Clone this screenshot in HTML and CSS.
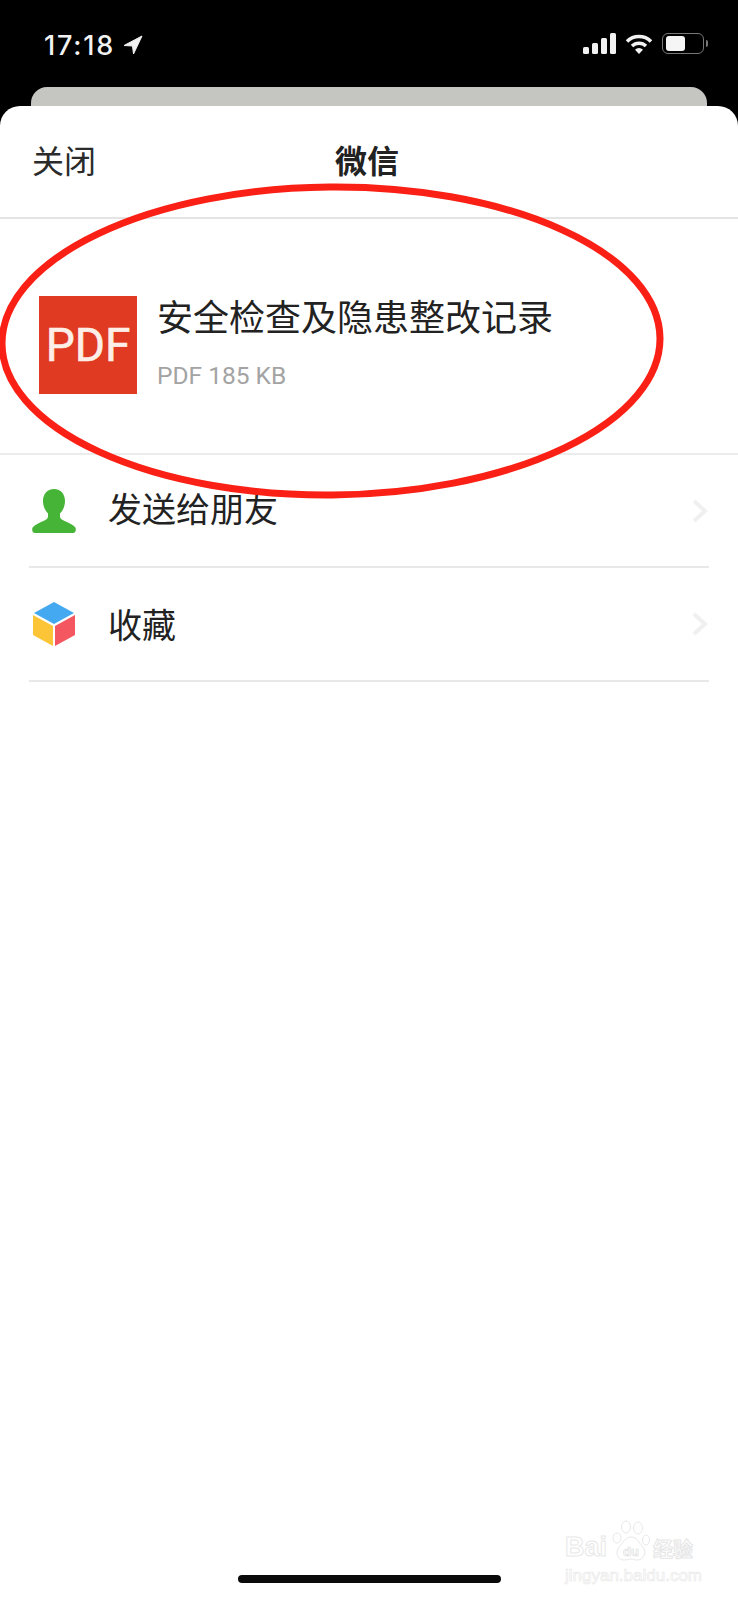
FILE: index.html
```html
<!DOCTYPE html>
<html lang="zh-CN">
<head>
  <meta charset="UTF-8">
  <meta name="viewport" content="width=device-width, initial-scale=1.0">
  <title>微信</title>
  <link rel="stylesheet" href="styles.css">
</head>
<body>
  <div class="phone">
    <div class="status-bar">
      <div class="status-left">
        <span class="time">17:18</span>
        <svg class="location" viewBox="0 0 20 20"><path d="M19 1 1 10.500l8.500.5 1 8z"/></svg>
      </div>
      <div class="status-right">
        <svg class="signal" viewBox="0 0 33 21"><rect x="0" y="14" width="6" height="7" rx="1.5"/><rect x="9" y="10" width="6" height="11" rx="1.5"/><rect x="18" y="5" width="6" height="16" rx="1.5"/><rect x="27" y="0" width="6" height="21" rx="1.5"/></svg>
        <svg class="wifi" viewBox="0 0 28 20">
          <path class="arc" d="M2 7.500a17 17 0 0 1 24 0"/>
          <path class="arc" d="M7 12a10 10 0 0 1 14 0"/>
          <path class="dot" d="M14 20l-4-4.200a5.600 5.600 0 0 1 8 0z"/>
        </svg>
        <div class="battery"><div class="battery-fill"></div></div>
        <div class="battery-nub"></div>
      </div>
    </div>
    <div class="peek-card"></div>
    <div class="sheet">
      <div class="sheet-header">
        <span class="close">关闭</span>
        <span class="sheet-title">微信</span>
      </div>
      <div class="file-info">
        <div class="pdf-icon">PDF</div>
        <div class="file-text">
          <div class="file-name">安全检查及隐患整改记录</div>
          <div class="file-meta">PDF 185 KB</div>
        </div>
      </div>
      <div class="action-list">
        <div class="action">
          <svg class="action-icon" viewBox="0 0 44 44"><path fill="#46b436" d="M22 0c7 0 11 5.500 11 12 0 5-2 9.500-5 12.500v3c0 2 1.500 3 4 4.200 4 1.800 8 3.300 11 6.300 1.500 1.500 1 6-2 6H3c-3 0-3.500-4.500-2-6 3-3 7-4.500 11-6.300 2.500-1.200 4-2.200 4-4.200v-3c-3-3-5-7.500-5-12.500C11 5.500 15 0 22 0z"/></svg>
          <span class="action-label">发送给朋友</span>
          <svg class="chevron" viewBox="0 0 16 24"><path d="M2 2l11 10L2 22"/></svg>
        </div>
        <div class="action">
          <svg class="action-icon" viewBox="0 0 44 44">
            <path fill="#45a9f2" d="M22 0l20 11-20 11L2 11z"/>
            <path fill="#fcc537" d="M1 13l20 11v20L1 33z"/>
            <path fill="#f4575f" d="M43 13 23 24v20l20-11z"/>
          </svg>
          <span class="action-label">收藏</span>
          <svg class="chevron" viewBox="0 0 16 24"><path d="M2 2l11 10L2 22"/></svg>
        </div>
      </div>
      <div class="home-bar"></div>
    </div>

    <!-- annotation drawn on top of the screenshot -->
    <svg class="red-circle" viewBox="0 0 738 1600">
      <ellipse cx="331" cy="341" rx="329" ry="154" transform="rotate(-0.5 331 341)"/>
    </svg>

    <div class="watermark">
      <div class="wm-top">
        <span class="wm-baidu">Bai</span>
        <svg class="wm-paw" viewBox="0 0 38 42">
          <ellipse cx="5" cy="18" rx="4" ry="5"/>
          <ellipse cx="14" cy="7" rx="4.500" ry="6"/>
          <ellipse cx="26" cy="8" rx="4.500" ry="6"/>
          <ellipse cx="34" cy="20" rx="3.500" ry="5"/>
          <path d="M19 17c6 0 8 6 12 10 4 5 1 13-6 13-3 0-4-1-6-1s-3 1-7 1c-7 0-9-8-5-13 4-4 6-10 12-10z"/>
          <text x="19" y="36">du</text>
        </svg>
        <span class="wm-jy">经验</span>
      </div>
      <div class="wm-url">jingyan.baidu.com</div>
    </div>
  </div>
</body>
</html>
```

FILE: styles.css
```css
* {
  box-sizing: border-box;
}
html, body {
  margin: 0;
  padding: 0;
  background: #000;
}
body {
  font-family: "Noto Sans CJK SC", "Noto Sans", sans-serif;
  color: #222;
}
.phone {
  position: relative;
  width: 738px;
  height: 1600px;
  overflow: hidden;
  display: flex;
  flex-direction: column;
}

/* status bar */
.status-bar {
  height: 87px;
  padding: 33px 30px 0 44px;
  display: flex;
  justify-content: space-between;
  align-items: flex-start;
  color: #f2f2f2;
}
.status-left {
  display: flex;
  align-items: center;
  gap: 8px;
  height: 24px;
}
.time {
  font-family: Inter, sans-serif;
  font-size: 27px;
  font-weight: 500;
  letter-spacing: 1.8px;
}
.location {
  width: 20px;
  height: 20px;
  fill: #f2f2f2;
  stroke: #f2f2f2;
  stroke-width: 1;
  stroke-linejoin: round;
}
.status-right {
  display: flex;
  align-items: center;
  height: 21px;
}
.signal {
  width: 33px;
  height: 21px;
  fill: #f2f2f2;
  margin-right: 9px;
}
.wifi {
  width: 28px;
  height: 20px;
  margin-right: 9px;
}
.wifi .arc {
  fill: none;
  stroke: #f2f2f2;
  stroke-width: 3.5;
}
.wifi .dot {
  fill: #f2f2f2;
}
.battery {
  width: 42px;
  height: 21px;
  padding: 2px 3px;
  border: 1.5px solid #77777a;
  border-radius: 6px;
}
.battery-fill {
  width: 19px;
  height: 100%;
  background: #f5f5f5;
  border-radius: 3px;
}
.battery-nub {
  width: 2px;
  height: 7px;
  margin-left: 2px;
  background: #77777a;
  border-radius: 0 2px 2px 0;
}

/* card behind the sheet */
.peek-card {
  height: 19px;
  margin: 0 31px;
  background: #c5c6c2;
  border-radius: 16px 16px 0 0;
}

/* sheet */
.sheet {
  flex: 1;
  background: #fff;
  border-radius: 20px 20px 0 0;
  display: flex;
  flex-direction: column;
}
.sheet-header {
  position: relative;
  height: 113px;
  padding: 0 33px 5px 32px;
  display: flex;
  align-items: center;
  justify-content: space-between;
  border-bottom: 2px solid #e4e4e4;
}
.close {
  font-size: 32px;
  color: #2b2b2b;
}
.sheet-title {
  font-size: 32px;
  font-weight: 700;
  margin-right: 306px;
}
.file-info {
  height: 236px;
  padding: 77px 0 0 39px;
  display: flex;
  align-items: flex-start;
  gap: 20px;
  border-bottom: 2px solid #ececec;
}
.pdf-icon {
  width: 98px;
  height: 98px;
  background: #e03a22;
  color: #fdeee8;
  font-family: Roboto, sans-serif;
  font-size: 46px;
  -webkit-text-stroke: 0.6px #fdeee8;
  line-height: 98px;
  text-align: center;
}
.file-name {
  font-size: 36px;
  line-height: 44px;
  margin-top: -3px;
  white-space: nowrap;
}
.file-meta {
  margin-top: 24px;
  font-family: Roboto, sans-serif;
  font-size: 24.500px;
  line-height: 30px;
  color: #a3a3a3;
}
.action-list {
  padding: 0 29px;
}
.action {
  height: 113px;
  padding-right: 1px;
  display: flex;
  align-items: center;
  border-bottom: 2px solid #e8e8e8;
}
.action + .action {
  height: 114px;
}
.action-icon {
  width: 44px;
  height: 44px;
  margin: 0 32px 0 3px;
  flex: none;
}
.action-label {
  flex: 1;
  font-size: 34px;
  margin-top: -6px;
}
.action + .action .action-label {
  margin-top: -2px;
}
.chevron {
  width: 16px;
  height: 24px;
  fill: none;
  stroke: #f0f0f0;
  stroke-width: 4;
}
.home-bar {
  width: 263px;
  height: 8px;
  margin: auto auto 17px;
  background: #0a0a0a;
  border-radius: 4px;
}

/* red annotation */
.red-circle {
  position: absolute;
  left: 0;
  top: 0;
  width: 738px;
  height: 1600px;
  pointer-events: none;
}
.red-circle ellipse {
  fill: none;
  stroke: #fb2015;
  stroke-width: 7;
}

/* site watermark */
.watermark {
  position: absolute;
  left: 565px;
  top: 1520px;
  width: 134px;
  color: #fff;
}
.wm-top {
  display: flex;
  align-items: flex-end;
  height: 42px;
}
.wm-baidu {
  width: 47px;
  font-family: "Liberation Sans", sans-serif;
  font-size: 27px;
  line-height: 30px;
  font-weight: 700;
  color: #fff;
  -webkit-text-stroke: 1px #e8e8e8;
}
.wm-paw {
  width: 38px;
  height: 42px;
  fill: #fff;
  stroke: #e8e8e8;
  stroke-width: 1;
}
.wm-paw text {
  font-family: "Liberation Sans", sans-serif;
  font-size: 13px;
  font-weight: 700;
  text-anchor: middle;
  fill: #fff;
  stroke: #e0e0e0;
  stroke-width: 0.7;
}
.wm-jy {
  margin-left: 3px;
  font-size: 20px;
  line-height: 26px;
  font-weight: 700;
  color: #fff;
  -webkit-text-stroke: 1px #e6e6e6;
  white-space: nowrap;
}
.wm-url {
  margin-top: 5px;
  font-family: "Liberation Sans", sans-serif;
  font-size: 17px;
  line-height: 18px;
  color: #fff;
  -webkit-text-stroke: 0.7px #eaeaea;
  white-space: nowrap;
}
```
